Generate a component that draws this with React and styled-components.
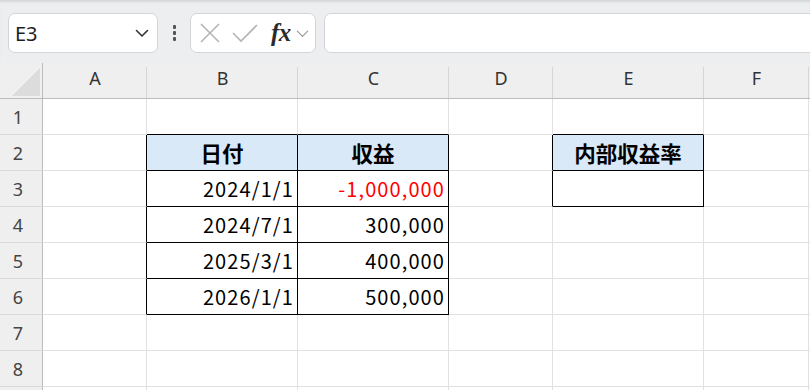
import React from 'react'
import styled, { createGlobalStyle } from 'styled-components'

const GlobalStyle = createGlobalStyle`
  html, body {
    margin: 0;
    padding: 0;
    background: #fff;
    overflow: hidden;
  }
`

const UI_FONT = '"Noto Sans", "Open Sans", sans-serif'
const CELL_FONT = '"Noto Sans CJK JP", "Noto Sans", sans-serif'
const GRID = '#e1e1e1'
const EDGE = '#bcbcbc'

const Screen = styled('div')({
  width: 810,
  height: 390,
  overflow: 'hidden',
  display: 'flex',
  flexDirection: 'column',
})

const Toolbar = styled('div')({
  height: 63,
  flexShrink: 0,
  boxSizing: 'border-box',
  paddingTop: 3,
  paddingLeft: 8,
  display: 'flex',
  alignItems: 'center',
  background: '#eceef0',
  boxShadow: 'inset 0 3px 2px -1px #d6d8da',
})

const Box = styled('div')(({ width }) => ({
  width: width || 'auto',
  height: 40,
  boxSizing: 'border-box',
  background: '#fff',
  border: '1px solid #d3d5d8',
  borderRadius: 7,
  display: 'flex',
  alignItems: 'center',
  flexShrink: 0,
}))

const NameBox = styled(Box)({
  justifyContent: 'space-between',
  padding: '0 7px 0 6px',
  fontFamily: UI_FONT,
  fontSize: 20,
  color: '#1f1f1f',
})

const FormulaBox = styled(Box)({
  flex: 1,
  marginLeft: 8,
  marginRight: -12,
})

const Kebab = styled('div')({
  width: 32,
  display: 'flex',
  flexDirection: 'column',
  alignItems: 'center',
  gap: 2.5,
  paddingLeft: 1,
  boxSizing: 'border-box',
  span: {
    width: 3.5,
    height: 3.5,
    borderRadius: 1,
    background: '#555',
  },
})

const FxBox = styled(Box)({
  padding: '0 0 0 8px',
  gap: 0,
})

const FxLabel = styled('span')({
  fontFamily: '"Liberation Serif", "DejaVu Serif", serif',
  fontStyle: 'italic',
  fontWeight: 700,
  fontSize: 25,
  color: '#2a2a2a',
  marginLeft: 12,
  letterSpacing: -0.5,
  lineHeight: 1,
  marginTop: -2,
})

const Sheet = styled('div')({
  display: 'grid',
  gridTemplateColumns: '43px 104px 151px 151px 104px 151px 105px 104px',
  gridAutoRows: 36,
})

const Corner = styled('div')({
  position: 'relative',
  background: '#efefef',
  borderRight: `1px solid ${EDGE}`,
  borderBottom: `1px solid ${EDGE}`,
  '&::before': {
    content: '""',
    position: 'absolute',
    left: 12,
    top: 5,
    width: 28,
    height: 28,
    background: '#dcdcdc',
    clipPath: 'polygon(100% 0, 100% 100%, 0 100%)',
  },
})

const ColHead = styled('div')({
  position: 'relative',
  background: '#efefef',
  borderBottom: `1px solid ${EDGE}`,
  display: 'flex',
  alignItems: 'center',
  justifyContent: 'center',
  paddingBottom: 6,
  boxSizing: 'border-box',
  fontFamily: UI_FONT,
  fontSize: 18,
  color: '#333',
  '&::after': {
    content: '""',
    position: 'absolute',
    right: 0,
    top: 4,
    bottom: 0,
    width: 1,
    background: '#d5d5d5',
  },
})

const RowHead = styled('div')({
  background: '#efefef',
  borderRight: `1px solid ${EDGE}`,
  borderBottom: '1px solid #dadada',
  boxSizing: 'border-box',
  display: 'flex',
  alignItems: 'center',
  justifyContent: 'center',
  paddingRight: 6,
  fontFamily: UI_FONT,
  fontSize: 18,
  color: '#444',
})

const Cell = styled('div')(({ $right, $bottom, $head, $red }) => ({
  boxSizing: 'border-box',
  borderRight: `1px solid ${$right ? '#000' : GRID}`,
  borderBottom: `1px solid ${$bottom ? '#000' : GRID}`,
  background: $head ? '#dae9f8' : '#fff',
  display: 'flex',
  alignItems: 'center',
  justifyContent: $head ? 'center' : 'flex-end',
  padding: $head ? '0 0 1px' : '0 3px 1px 0',
  fontFamily: CELL_FONT,
  fontSize: $head ? 21.5 : 20,
  letterSpacing: $head ? 0 : 1.1,
  fontWeight: $head ? 700 : 400,
  color: $red ? '#ff0000' : '#000',
  whiteSpace: 'nowrap',
  overflow: 'hidden',
}))

const Chevron = ({ size = 16, color = '#333', width = 1.6 }) => (
  <svg width={size} height={size} viewBox="0 0 16 16" fill="none">
    <path d="M2.5 5.5 L8 11 L13.5 5.5" stroke={color} strokeWidth={width} strokeLinecap="round" strokeLinejoin="round" />
  </svg>
)

const CancelIcon = () => (
  <svg width="22" height="22" viewBox="0 0 22 22" fill="none">
    <path d="M2 2 L20 20 M20 2 L2 20" stroke="#b4b4b4" strokeWidth="1.6" />
  </svg>
)

const CheckIcon = () => (
  <svg width="28" height="22" viewBox="0 0 28 22" fill="none" style={{ marginLeft: 10 }}>
    <path d="M2 11 L10 19 L26 3" stroke="#b4b4b4" strokeWidth="1.6" />
  </svg>
)

const columns = ['A', 'B', 'C', 'D', 'E', 'F', '']
const rows = [1, 2, 3, 4, 5, 6, 7, 8, '']

const data = {
  B2: { text: '日付', head: true },
  C2: { text: '収益', head: true },
  B3: { text: '2024/1/1' },
  C3: { text: '-1,000,000', red: true },
  B4: { text: '2024/7/1' },
  C4: { text: '300,000' },
  B5: { text: '2025/3/1' },
  C5: { text: '400,000' },
  B6: { text: '2026/1/1' },
  C6: { text: '500,000' },
  E2: { text: '内部収益率', head: true },
  E3: { text: '' },
}

const boxed = (c, r) => !!data[`${columns[c]}${r}`]

const App = () => (
  <Screen>
    <GlobalStyle />
    <Toolbar>
      <NameBox width={150}>
        <span>E3</span>
        <Chevron />
      </NameBox>
      <Kebab>
        <span />
        <span />
        <span />
      </Kebab>
      <FxBox width={126}>
        <CancelIcon />
        <CheckIcon />
        <FxLabel>fx</FxLabel>
        <span style={{ marginLeft: 4, display: 'flex' }}>
          <Chevron size={15} color="#9a9a9a" width={1.3} />
        </span>
      </FxBox>
      <FormulaBox />
    </Toolbar>
    <Sheet>
      <Corner />
      {columns.map((c, i) => (
        <ColHead key={i}>{c}</ColHead>
      ))}
      {rows.map((r, ri) => (
        <React.Fragment key={ri}>
          <RowHead>{r}</RowHead>
          {columns.map((c, i) => {
            const cell = r && c ? data[`${c}${r}`] : null
            return (
              <Cell
                key={i}
                $right={!!r && (boxed(i, r) || boxed(i + 1, r))}
                $bottom={!!r && (boxed(i, r) || boxed(i, r + 1))}
                $head={cell && cell.head}
                $red={cell && cell.red}
              >
                {cell && cell.text}
              </Cell>
            )
          })}
        </React.Fragment>
      ))}
    </Sheet>
  </Screen>
)

export default App
